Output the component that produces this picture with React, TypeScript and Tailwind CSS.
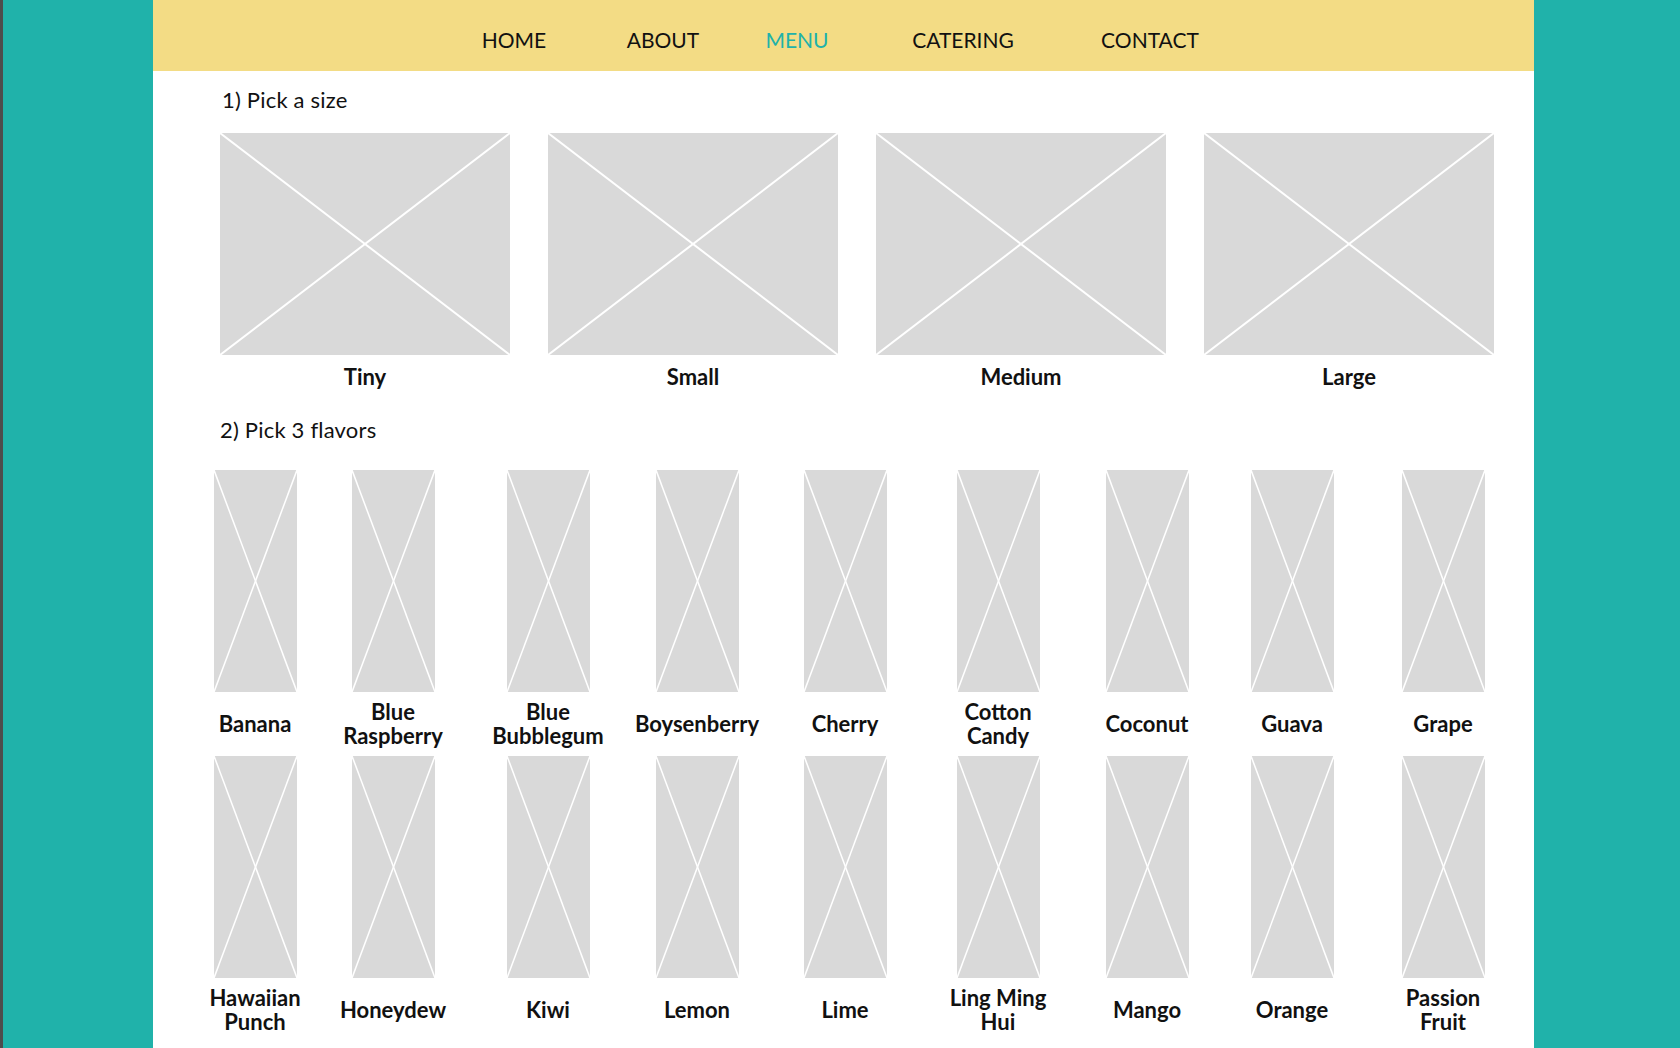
const navItems = [
  { label: 'HOME', ml: 'ml-[301px]' },
  { label: 'ABOUT', ml: 'ml-[29px]' },
  { label: 'MENU', ml: 'ml-[14px]', active: true },
  { label: 'CATERING', ml: 'ml-[46px]' },
  { label: 'CONTACT', ml: 'ml-[67px]' },
];

const sizes = ['Tiny', 'Small', 'Medium', 'Large'];

// left margins that put each flavour column on its centre line
const colGaps = ['ml-[37px]', 'ml-[8px]', 'ml-[25px]', 'ml-[19px]', 'ml-[18px]', 'ml-[23px]', 'ml-[19px]', 'ml-[15px]', 'ml-[21px]'];

const flavorRows = [
  [['Banana'], ['Blue', 'Raspberry'], ['Blue', 'Bubblegum'], ['Boysenberry'], ['Cherry'], ['Cotton', 'Candy'], ['Coconut'], ['Guava'], ['Grape']],
  [['Hawaiian', 'Punch'], ['Honeydew'], ['Kiwi'], ['Lemon'], ['Lime'], ['Ling Ming', 'Hui'], ['Mango'], ['Orange'], ['Passion', 'Fruit']],
];

function Placeholder({ className, stroke = 2 }: { className: string; stroke?: number }) {
  return (
    <svg className={`block bg-[#d9d9d9] ${className}`} viewBox="0 0 100 100" preserveAspectRatio="none">
      <line x1="0" y1="0" x2="100" y2="100" stroke="#fff" strokeWidth={stroke} vectorEffect="non-scaling-stroke" />
      <line x1="100" y1="0" x2="0" y2="100" stroke="#fff" strokeWidth={stroke} vectorEffect="non-scaling-stroke" />
    </svg>
  );
}

export default function App() {
  return (
    <div className="min-h-screen bg-[#20b2aa] border-l-[3px] border-[#4d4d4d] font-['Lato','Liberation_Sans',sans-serif] text-[#111]">
      <div className="ml-[150px] w-[1381px] min-h-screen bg-white">
        <nav className="flex h-[71px] items-center bg-[#f3dc85] pt-[9px]">
          {navItems.map((item) => (
            <a
              key={item.label}
              href="#"
              className={`${item.ml} w-[120px] text-center text-[21px] leading-[24px] whitespace-nowrap ${item.active ? 'text-[#20b2aa]' : 'text-[#111]'}`}
            >
              {item.label}
            </a>
          ))}
        </nav>

        <section className="pl-[67px] pt-[17px]">
          <h2 className="pl-[2px] text-[22px] leading-[24px] tracking-[0.2px]">1) Pick a size</h2>
          <div className="mt-[21px] flex gap-[38px]">
            {sizes.map((size) => (
              <div key={size} className="flex w-[290px] flex-col items-center">
                <Placeholder className="h-[222px] w-[290px]" />
                <span className="mt-[10px] text-[22px] leading-[24px] font-bold">{size}</span>
              </div>
            ))}
          </div>
          <h2 className="mt-[29px] text-[22px] leading-[24px] tracking-[0.2px]">2) Pick 3 flavors</h2>
        </section>

        <section className="mt-[28px] flex flex-col">
          {flavorRows.map((row, r) => (
            <div key={r} className="flex">
              {row.map((lines, i) => (
                <div key={lines.join(' ')} className={`${colGaps[i]} flex w-[130px] flex-col items-center`}>
                  <Placeholder className="h-[222px] w-[83px]" stroke={1.5} />
                  <div className="flex h-[64px] flex-col items-center justify-center text-center text-[22px] leading-[24px] font-bold whitespace-nowrap">
                    {lines.map((l) => (
                      <span key={l}>{l}</span>
                    ))}
                  </div>
                </div>
              ))}
            </div>
          ))}
        </section>
      </div>
    </div>
  );
}
